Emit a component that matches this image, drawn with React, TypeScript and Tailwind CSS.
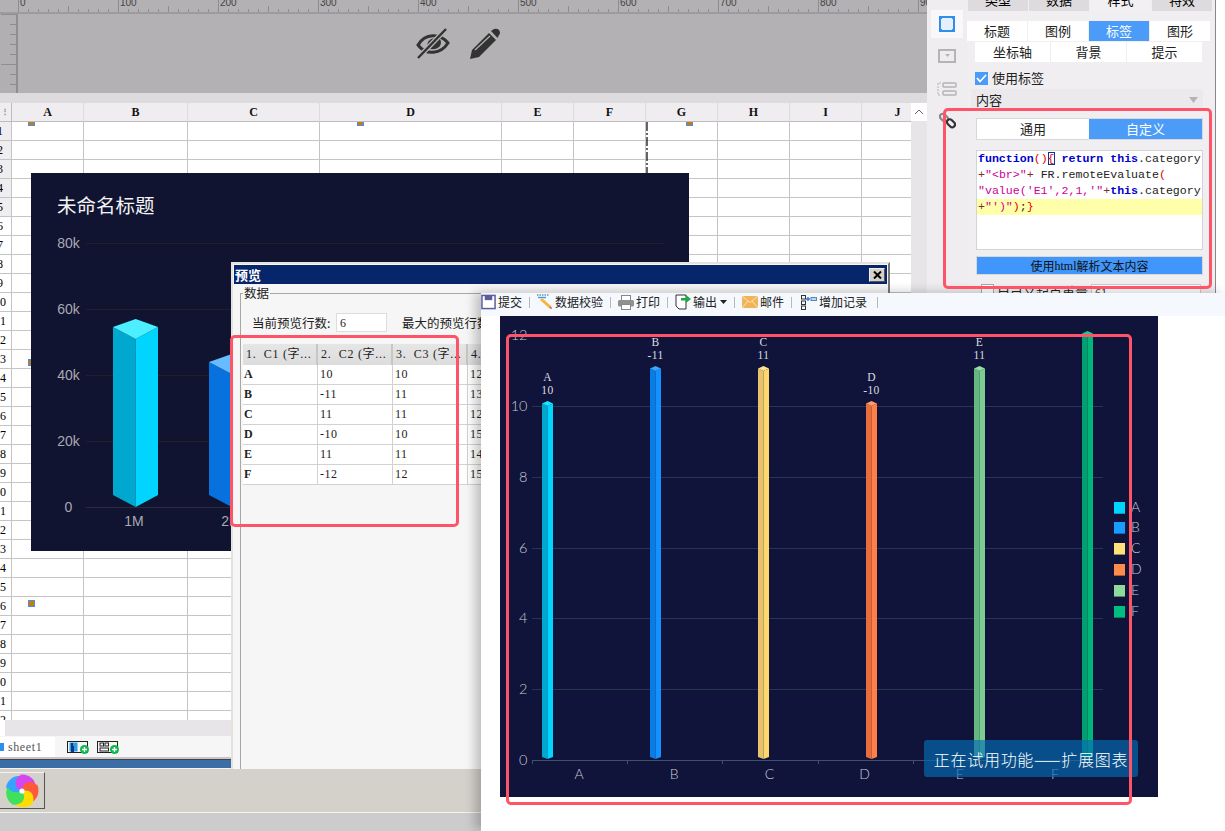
import React from "react";

const cjk = "font-['Noto_Sans_CJK_SC','Liberation_Sans',sans-serif]";
const mono = "font-['Liberation_Mono','Noto_Sans_CJK_SC',monospace]";
const serif = "font-['Liberation_Serif','Noto_Sans_CJK_SC',serif]";

const columns = ["A", "B", "C", "D", "E", "F", "G", "H", "I", "J"];
const sheetGrid = "grid grid-cols-[12px_72px_104px_132px_182px_72px_72px_72px_72px_72px_72px] w-[1022px]";

function Ruler() {
  const ticks = Array.from({ length: 92 }, (_, i) => i);
  return (
    <div className="relative h-[14px] bg-[#b3b1b3] border-b-2 border-[#9d9b9d] overflow-hidden">
      <svg width="927" height="14" className="block">
        {ticks.map((i) => {
          const x = 18 + i * 10;
          const h = i % 10 === 0 ? 13 : i % 5 === 0 ? 7 : 4;
          return <line key={i} x1={x + 0.5} x2={x + 0.5} y1={13 - h} y2={13} stroke="#8f8d8f" />;
        })}
        {[0, 100, 200, 300, 400, 500, 600, 700, 800, 900].map((n, i) => (
          <text key={n} x={20 + i * 100} y={6} fontSize="10" fill="#444" fontFamily="Liberation Sans">{n}</text>
        ))}
      </svg>
    </div>
  );
}

function EyeOff() {
  return (
    <svg width="34" height="32" viewBox="0 0 34 32">
      <path d="M2 17 C9 5 24 5 32 15 C25 26 10 28 2 17Z" fill="none" stroke="#333" strokeWidth="3" />
      <path d="M12 20 C9 12 18 8 24 11 C28 18 19 24 12 20Z" fill="#333" />
      <path d="M30 1 L2 30" stroke="#b3b1b3" strokeWidth="5" />
      <path d="M30 1 L2 30" stroke="#333" strokeWidth="2.4" />
    </svg>
  );
}

function PencilIcon() {
  return (
    <svg width="32" height="32" viewBox="0 0 32 32">
      <path d="M1 31 L3 22 L20 5 L27 12 L10 29Z" fill="#333" />
      <path d="M22 3 L25 1 Q28 0 30 2 Q32 5 30 7 L28.5 10Z" fill="#333" />
      <path d="M6 22 L21 8" stroke="#b3b1b3" strokeWidth="1.2" />
    </svg>
  );
}

function Canvas() {
  return (
    <div className="flex h-[79px] bg-[#b3b1b3]">
      <div className="relative w-[18px] shrink-0 bg-[#b1afb1] border-r-2 border-[#8f8d8f] overflow-hidden">
        <svg width="16" height="79" className="block">
          {[0, 1, 2, 3, 4, 5, 6, 7].map((i) => (
            <line key={i} x1={i % 5 === 0 ? 1 : 10} x2="16" y1={i * 10 + 0.5} y2={i * 10 + 0.5} stroke="#8f8d8f" />
          ))}
        </svg>
      </div>
      <div className="flex items-start gap-[19px] pl-[398px] pt-[14px]">
        <EyeOff />
        <PencilIcon />
      </div>
    </div>
  );
}

function Sheet() {
  const rows = Array.from({ length: 32 }, (_, i) => i + 1);
  return (
    <div className="flex h-[617px]">
      <div className={`w-[911px] h-[617px] overflow-hidden bg-white ${serif}`}>
        <div className={`${sheetGrid} h-[19px] bg-[#efedf0] text-[12px] font-bold text-[#111]`}>
          <div className="border-b border-[#bdbdbd] border-r flex flex-col items-start justify-center gap-[2px] pl-[1px]">
            <span className="text-[#888] text-[8px] leading-[8px]">⋮</span>
          </div>
          {columns.map((c) => (
            <div key={c} className="border-b border-r border-r-[#dcdcdc] border-b-[#bdbdbd] flex items-center justify-center">{c}</div>
          ))}
        </div>
        {rows.map((r) => (
          <div key={r} className={`${sheetGrid} h-[19px]`}>
            <div className={`border-r border-b border-[#c4c4c4] text-[12px] leading-[18px] overflow-hidden whitespace-nowrap ${r <= 5 ? "bg-[#efedf0]" : "bg-white"}`}>
              <span className={`block w-[6px] text-right ${r < 10 ? "-ml-[3px]" : "ml-0"}`}>{r % 10}</span>
            </div>
            {columns.map((c) => (
              <div key={c} className="border-r border-b border-[#c4c4c4]" />
            ))}
          </div>
        ))}
      </div>
      <div className="w-[16px] bg-[#e8e5e8]">
        <div className="h-[18px] bg-white flex items-center justify-center">
          <svg width="10" height="6" viewBox="0 0 10 6"><path d="M1 5 L5 1 L9 5" fill="none" stroke="#666" /></svg>
        </div>
      </div>
    </div>
  );
}

function Marker({ className }: { className: string }) {
  return <div className={`absolute w-[7px] bg-[#cc7a0a] border border-[#3d8ff0] ${className}`} />;
}

function BigChart() {
  const ys: [string, number][] = [["80k", 243], ["60k", 309], ["40k", 375], ["20k", 441], ["0", 507]];
  return (
    <svg width="658" height="378" viewBox="31 173 658 378" className="block">
      <rect x="31" y="173" width="658" height="378" fill="#101431" />
      {ys.map(([t, y]) => (
        <g key={t}>
          <line x1="86" x2="664" y1={y + 0.5} y2={y + 0.5} stroke={t === "0" ? "#2c2c3e" : "#1f2029"} />
          <text x="68.5" y={y + 5} textAnchor="middle" fontSize="14" fill="#a9a9b2" fontFamily="Liberation Sans">{t}</text>
        </g>
      ))}
      <polygon points="113,327 135.7,339 135.7,507 113,495" fill="#00a8cf" />
      <polygon points="135.7,339 158,327 158,495 135.7,507" fill="#00d4ff" />
      <polygon points="113,327 135.7,319 158,327 135.7,339" fill="#4cefff" />
      <polygon points="209,362 231.7,374 231.7,507 209,495" fill="#0772de" />
      <polygon points="231.7,374 254,362 254,495 231.7,507" fill="#0a84ff" />
      <polygon points="209,362 231.7,354 254,362 231.7,374" fill="#66bcff" />
      <text x="134" y="526" textAnchor="middle" fontSize="14" fill="#a9a9b2" fontFamily="Liberation Sans">1M</text>
      <text x="231" y="526" textAnchor="middle" fontSize="14" fill="#a9a9b2" fontFamily="Liberation Sans">2M</text>
      <text x="57" y="213" fontSize="19.5" fill="#f4f4f6" fontFamily="Noto Sans CJK SC">未命名标题</text>
    </svg>
  );
}

function SheetTabs() {
  return (
    <div>
      <div className="h-[16px] bg-white pl-[5px]"><div className="h-full bg-[#e8e5e8]" /></div>
      <div className={`h-[21px] bg-[#f6f6f6] flex items-center ${serif}`}>
        <div className="w-[55px] h-[20px] bg-white flex items-center">
          <div className="w-[4px] h-[8px] bg-[#2e8fe8] mr-[4px]" />
          <span className="text-[12px] tracking-[0.6px] text-[#555]">sheet1</span>
        </div>
        <div className="flex gap-[8px] ml-[12px]">
          <AddIcon kind="chart" />
          <AddIcon kind="form" />
        </div>
      </div>
      <div className="h-[3px] bg-[#c8c6c8] border-b border-[#444]" />
      <div className="h-[8px] bg-[#3a6ea5]" />
      <div className="h-px bg-[#f4f3f0]" />
      <div className="h-[43px] bg-[#d4d1cb] pt-[3px]">
        <div className="w-[45px] h-[37px] border border-[#555] border-l-0 border-t-[#f4f4f4] bg-[#d4d1cb] flex items-center justify-center">
          <Wheel />
        </div>
      </div>
      <div className="h-px bg-[#f4f3f0]" />
      <div className="h-[18px] bg-[#cccccc]" />
    </div>
  );
}

function AddIcon({ kind }: { kind: "chart" | "form" }) {
  return (
    <svg width="22" height="14" viewBox="0 0 22 14">
      <rect x="0.5" y="1.5" width="20" height="11" fill="none" stroke="#222" />
      {kind === "chart" ? (
        <>
          <rect x="2.5" y="2.5" width="8" height="9" fill="#2d9ee8" />
          <rect x="4" y="6" width="3" height="6" fill="#0a3a80" />
          <rect x="4" y="3" width="2" height="3" fill="#0a3a80" />
        </>
      ) : (
        <>
          <rect x="3" y="3" width="3.5" height="3" fill="none" stroke="#222" />
          <rect x="8" y="3" width="3.5" height="3" fill="none" stroke="#222" />
          <rect x="3" y="8" width="8.5" height="3" fill="none" stroke="#222" />
        </>
      )}
      <circle cx="17.5" cy="9.5" r="4.5" fill="#0fb84d" />
      <path d="M15 9.5 H20 M17.5 7 V12" stroke="#fff" strokeWidth="1.3" />
    </svg>
  );
}

function Wheel() {
  const colors = ["#35a4ff", "#d545f0", "#ff5a3c", "#ffdc00", "#3fe05c"];
  return (
    <svg width="34" height="34" viewBox="-17 -17 34 34">
      {colors.map((c, i) => (
        <g key={c} transform={`rotate(${i * 72 - 60})`}>
          <path d="M0 0 C-9 -1 -11 -10 -4 -16 C3 -18 11 -14 12 -8 C6 -9 2 -6 0 0Z" fill={c} />
        </g>
      ))}
      <circle r="2.6" fill="#fff" />
    </svg>
  );
}

function RightPanel() {
  const tabClass = "flex items-center justify-center bg-white text-[13px] leading-[18px] text-[#222]";
  return (
    <div className={`flex h-[293px] w-[298px] bg-[#efedf0] ${cjk}`}>
      <div className="w-[40px] flex flex-col items-center pt-[10px]">
        <div className="w-[32px] h-[28px] bg-[#f8f8fa] flex items-center justify-center">
          <svg width="18" height="18" viewBox="0 0 18 18">
            <rect x="2" y="2" width="14" height="14" fill="#e6f0fc" stroke="#2e8fee" strokeWidth="2" />
            <rect x="1" y="1" width="3" height="3" fill="#2e8fee" /><rect x="14" y="1" width="3" height="3" fill="#2e8fee" />
            <rect x="1" y="14" width="3" height="3" fill="#2e8fee" /><rect x="14" y="14" width="3" height="3" fill="#2e8fee" />
          </svg>
        </div>
        <svg width="18" height="14" viewBox="0 0 18 14" className="mt-[11px]">
          <rect x="1" y="1" width="16" height="12" fill="none" stroke="#b4b4b4" strokeWidth="2" />
          <path d="M7 5 H12 L9.5 8Z" fill="#b4b4b4" />
        </svg>
        <svg width="20" height="14" viewBox="0 0 20 14" className="mt-[19px]">
          <rect x="6" y="1" width="13" height="4" rx="1" fill="none" stroke="#b4b4b4" strokeWidth="1.5" />
          <rect x="6" y="9" width="13" height="4" rx="1" fill="none" stroke="#b4b4b4" strokeWidth="1.5" />
          <path d="M4 1 H1 V13 H4" fill="none" stroke="#b4b4b4" strokeDasharray="2 1" />
        </svg>
        <svg width="17" height="17" viewBox="0 0 17 17" className="mt-[16px]">
          <g fill="none" strokeWidth="2.2">
            <rect x="0.5" y="3" width="9" height="5.5" rx="2.7" transform="rotate(45 5 5.7)" stroke="#8a8a8a" />
            <rect x="7.5" y="8.5" width="9" height="5.5" rx="2.7" transform="rotate(45 12 11.2)" stroke="#333" />
          </g>
        </svg>
      </div>
      <div className="w-[248px] bg-[#f0eef0] overflow-hidden">
        <div className="grid grid-cols-[60px_60px_61px_60px] gap-x-px h-[11px] overflow-hidden pl-px">
          {["类型", "数据", "样式", "特效"].map((t, i) => (
            <div key={t} className={`h-[11px] text-[13px] leading-[0px] text-center ${i === 2 ? "bg-[#f2f0f3]" : "bg-[#dddbdd]"}`}>
              <span className="block">{t}</span>
            </div>
          ))}
        </div>
        <div className="grid grid-cols-[60px_60px_60px_60px] gap-x-px mt-[10px] h-[20px]">
          {["标题", "图例", "标签", "图形"].map((t) => (
            <div key={t} className={t === "标签" ? "flex items-center justify-center bg-[#4a9cf8] text-[13px] leading-[18px] text-white" : tabClass}>{t}</div>
          ))}
        </div>
        <div className="grid grid-cols-[75px_75px_75px] gap-x-px mt-px ml-[8px] h-[20px]">
          {["坐标轴", "背景", "提示"].map((t) => (
            <div key={t} className={tabClass}>{t}</div>
          ))}
        </div>
        <div className="flex items-center h-[14px] mt-[9px] ml-[8px] gap-[4px]">
          <div className="w-[13px] h-[13px] bg-[#4a9cf8] flex items-center justify-center">
            <svg width="11" height="9" viewBox="0 0 11 9"><path d="M1 4 L4 7.5 L10 1" fill="none" stroke="#fff" strokeWidth="1.8" /></svg>
          </div>
          <span className="text-[13px] leading-[12px] text-[#222]">使用标签</span>
        </div>
        <div className="mt-[4px] mx-[4px] w-[232px] h-[21px] bg-[#ebe9eb] flex items-center justify-between px-[5px]">
          <span className="text-[13px] text-[#222] leading-[21px]">内容</span>
          <svg width="9" height="6" viewBox="0 0 9 6"><path d="M0 0 H9 L4.5 6Z" fill="#b5b5b5" /></svg>
        </div>
        <div className="ml-[9px] w-[227px] h-[22px] mt-[8px] flex border border-[#d8d8d8] bg-white">
          <div className="w-[112px] flex items-center justify-center text-[13px] text-[#222]">通用</div>
          <div className="w-[113px] flex items-center justify-center text-[13px] text-white bg-[#4a9cf8]">自定义</div>
        </div>
        <Code />
        <div className="ml-[9px] mt-[6px] w-[227px] h-[19px] bg-[#4096fa] border border-[#d8d8d8] flex items-center justify-center text-[12px] leading-[16px] text-[#111]">
          使用<span className={serif}>html</span>解析文本内容
        </div>
        <div className="ml-[14px] mt-[9px] flex items-start gap-[3px]">
          <div className="w-[13px] h-[13px] border border-[#aaa] bg-white" />
          <span className="text-[13px] text-[#222] leading-[15px]">自己义起点重量</span>
          <div className="w-[110px] h-[16px] border border-[#ccc] bg-white pl-[3px] text-[11px] leading-[15px] text-[#444]">61</div>
        </div>
      </div>
      <div className="w-px bg-[#888]" />
      <div className="w-[9px] bg-white" />
    </div>
  );
}

function Code() {
  const kw = "text-[#0000d0] font-bold";
  const str = "text-[#cc0099]";
  const red = "text-[#e00000]";
  const op = "text-[#7a3030]";
  return (
    <div className={`ml-[9px] mt-[10px] w-[227px] h-[100px] bg-white border border-[#d4d4d4] text-[11.6px] leading-[16px] whitespace-nowrap overflow-hidden ${mono}`}>
      <div className="pl-px text-[#222]">
        <span className={kw}>function</span><span className={red}>()</span><span className={`${red} outline outline-1 outline-[#1030a0] -outline-offset-1`}>{"{"}</span> <span className={kw}>return</span> <span className={kw}>this</span>.category
      </div>
      <div className="pl-px text-[#222]">
        <span className={op}>+</span><span className={str}>{'"<br>"'}</span><span className={op}>+</span> FR.remoteEvaluate<span className={red}>(</span>
      </div>
      <div className="pl-px text-[#222]">
        <span className={str}>{`"value('E1',2,1,'"`}</span><span className={op}>+</span><span className={kw}>this</span>.category
      </div>
      <div className="pl-px bg-[#ffffaa] text-[#222]">
        <span className={op}>+</span><span className={str}>{`"')"`}</span><span className={red}>)</span>;<span className={red}>{"}"}</span>
      </div>
    </div>
  );
}

const rowsData = [
  ["A", "10", "10", "12"],
  ["B", "-11", "11", "13"],
  ["C", "11", "11", "12"],
  ["D", "-10", "10", "15"],
  ["E", "11", "11", "14"],
  ["F", "-12", "12", "15"],
];

function Dialog() {
  const cols = "grid grid-cols-[75px_75px_75px_75px]";
  return (
    <div className={`absolute left-[231px] top-[262px] w-[659px] h-[507px] bg-[#f6f6f6] border-2 border-[#e4e2dc] border-b-0 border-r-[#777] flex flex-col ${cjk}`}>
      <div className="h-[19px] mt-px mx-px bg-[#07256b] flex items-center justify-between pl-[1px] pr-[2px]">
        <span className="text-[13px] font-bold text-white leading-[18px]">预览</span>
        <div className="w-[16px] h-[14px] bg-[#d4d1cb] border border-[#f0f0f0] border-r-[#555] border-b-[#555] flex items-center justify-center">
          <svg width="9" height="8" viewBox="0 0 9 8"><path d="M1 0.5 L8 7.5 M8 0.5 L1 7.5" stroke="#000" strokeWidth="2" /></svg>
        </div>
      </div>
      <div className="relative mt-[9px] ml-[7px] mr-[7px] flex-1 border-l border-t border-[#a9a79f]">
        <span className="absolute -top-[10px] left-[2px] bg-[#f6f6f6] px-[1px] text-[12.5px] leading-[18px] text-[#222]">数据</span>
        <div className="flex items-center h-[19px] mt-[19px] pl-[11px] text-[12.5px] leading-[18px] text-[#222]">
          <span className="w-[84px] whitespace-nowrap">当前预览行数:</span>
          <div className={`w-[51px] h-[19px] border border-[#ddd] bg-white pl-[3px] text-[12px] leading-[18px] ${serif}`}>6</div>
          <span className="ml-[15px] whitespace-nowrap">最大的预览行数</span>
        </div>
        <div className={`mt-[12px] ml-[2px] text-[12px] ${serif}`}>
          <div className={`${cols} h-[21px] bg-gradient-to-b from-[#e6e6e6] to-[#dcdcdc] text-[#222]`}>
            {["1.  C1 (字...", "2.  C2 (字...", "3.  C3 (字...", "4."].map((h) => (
              <div key={h} className="border-r-2 border-[#c8c6c0] pl-[3px] tracking-[0.7px] leading-[20px] whitespace-pre overflow-hidden">{h}</div>
            ))}
          </div>
          {rowsData.map((r) => (
            <div key={r[0]} className={`${cols} h-[20px]`}>
              {r.map((v, i) => (
                <div key={i} className={`bg-white border-b border-r border-[#d2d2d2] leading-[19px] text-[#222] ${i === 0 ? "pl-px font-bold" : "pl-[2px] tracking-[0.5px]"}`}>{v}</div>
              ))}
            </div>
          ))}
        </div>
      </div>
    </div>
  );
}

function ToolItem({ icon, label, extra }: { icon: React.ReactNode; label: string; extra?: React.ReactNode }) {
  return (
    <div className="flex items-center gap-[2px]">
      {icon}
      <span className="text-[12px] text-[#222] whitespace-nowrap leading-[16px]">{label}</span>
      {extra}
    </div>
  );
}

function Sep() {
  return <div className="w-px h-[11px] bg-[#b8b8b8]" />;
}

function Toolbar() {
  return (
    <div className={`h-[23px] bg-[#f5f8fd] flex items-center gap-[7px] pb-[5px] ${cjk}`}>
      <ToolItem label="提交" icon={
        <svg width="15" height="16" viewBox="0 0 16 16">
          <rect x="1" y="1" width="14" height="14" fill="#fff" stroke="#5c5c9e" strokeWidth="1.6" />
          <rect x="4" y="1" width="8" height="5" fill="#5c5c9e" />
        </svg>
      } />
      <Sep />
      <ToolItem label="数据校验" icon={
        <svg width="16" height="16" viewBox="0 0 16 16">
          <path d="M0 1 H12" stroke="#3a5a8a" strokeDasharray="1.5 1" />
          <path d="M1 3.5 H9" stroke="#38a0e8" strokeWidth="1.4" />
          <path d="M3 6 L5 4 L14 12 L12 14Z" fill="#f5b53c" />
          <path d="M12 14 L14 12 L15 15Z" fill="#e8443a" />
        </svg>
      } />
      <Sep />
      <ToolItem label="打印" icon={
        <svg width="16" height="15" viewBox="0 0 16 15">
          <rect x="3.5" y="0.5" width="9" height="5" fill="#fff" stroke="#888" />
          <rect x="0" y="5" width="16" height="6.5" rx="1.5" fill="#909090" />
          <rect x="3.5" y="9.5" width="9" height="5" fill="#fff" stroke="#888" />
        </svg>
      } />
      <Sep />
      <ToolItem label="输出" icon={
        <svg width="16" height="16" viewBox="0 0 16 16">
          <path d="M1 1 H11 V15 H4 L1 12Z" fill="#fff" stroke="#333" />
          <path d="M6 4 H11 V1 L16 5 L11 9 V6.5 H6Z" fill="#20a848" />
        </svg>
      } extra={<svg width="7" height="4" viewBox="0 0 7 4" className="ml-[1px]"><path d="M0 0 H7 L3.5 4Z" fill="#222" /></svg>} />
      <Sep />
      <ToolItem label="邮件" icon={
        <svg width="16" height="12" viewBox="0 0 16 12">
          <rect width="16" height="12" fill="#f0b45a" />
          <path d="M0 0 L8 6.5 L16 0 M0 12 L6 5 M16 12 L10 5" fill="none" stroke="#fbe3bb" />
        </svg>
      } />
      <Sep />
      <ToolItem label="增加记录" icon={
        <svg width="16" height="15" viewBox="0 0 16 15" className="ml-[2px]">
          <rect x="0.5" y="0.5" width="4" height="3.5" fill="none" stroke="#333" />
          <rect x="0.5" y="6" width="4" height="3.5" fill="none" stroke="#333" />
          <rect x="0.5" y="11" width="4" height="3.5" fill="none" stroke="#333" />
          <path d="M5 4 H9 M7 2 V6" stroke="#2a80e0" strokeWidth="1.4" />
          <rect x="10" y="2.5" width="5.5" height="3" fill="#bcd6f0" stroke="#5a86b0" />
        </svg>
      } />
      <div className="w-px h-[11px] bg-[#b8b8b8] ml-[3px]" />
    </div>
  );
}

const bars = [
  { n: "A", v: "10", cx: 547.5, top: 401, l: "#00a8cf", r: "#00d4ff", t: "#19e4ff", lab: 377, val: 390 },
  { n: "B", v: "-11", cx: 655.5, top: 366, l: "#0a7ce6", r: "#1291ff", t: "#3aa6ff", lab: 342, val: 355 },
  { n: "C", v: "11", cx: 763.5, top: 366, l: "#e9c36c", r: "#ffd76f", t: "#ffe490", lab: 342, val: 355 },
  { n: "D", v: "-10", cx: 871.5, top: 401, l: "#e86d3c", r: "#ff7f47", t: "#ff9a6a", lab: 377, val: 390 },
  { n: "E", v: "11", cx: 979.5, top: 366, l: "#66b77f", r: "#7ccd92", t: "#98dcab", lab: 342, val: 355 },
  { n: "F", v: "", cx: 1087.5, top: 331, l: "#00a070", r: "#00b47a", t: "#1cc88e", lab: 0, val: 0 },
];
const legend = [
  { n: "A", c: "#00d4ff", d: "#0a9cc0", y: 502 },
  { n: "B", c: "#1a9bff", d: "#0c6cc0", y: 522 },
  { n: "C", c: "#ffe27a", d: "#9a8a5a", y: 543 },
  { n: "D", c: "#ff8c4a", d: "#a85a38", y: 564 },
  { n: "E", c: "#8ed99c", d: "#4e8a68", y: 585 },
  { n: "F", c: "#00bd80", d: "#08805c", y: 606 },
];

function ThinChart() {
  const labelFont = "Lato, Liberation Sans, sans-serif";
  const axis: [string, number][] = [["12", 335], ["10", 406], ["8", 477], ["6", 548], ["4", 618], ["2", 689], ["0", 760]];
  return (
    <svg width="658" height="481" viewBox="500 316 658 481" className="block">
      <rect x="500" y="316" width="658" height="481" fill="#10143a" />
      {axis.map(([t, y]) => (
        <g key={t}>
          {t !== "0" && t !== "12" && <line x1="532" x2="1103" y1={y + 0.5} y2={y + 0.5} stroke="#26364e" />}
          <text x="527.5" y={y + 5} textAnchor="end" fontSize="14.5" fontWeight="300" fill="#c8cad8" fontFamily={labelFont}>{t}</text>
        </g>
      ))}
      <line x1="532" x2="1103" y1="760.5" y2="760.5" stroke="#3f506b" />
      {[532, 627, 722, 818, 913, 1008, 1103].map((x) => (
        <line key={x} x1={x + 0.5} x2={x + 0.5} y1="760" y2="764" stroke="#3f506b" />
      ))}
      {["A", "B", "C", "D", "E", "F"].map((n, i) => (
        <text key={n} x={579 + i * 95.2} y="779" textAnchor="middle" fontSize="14" fontWeight="300" fill="#c8cad8" fontFamily={labelFont}>{n}</text>
      ))}
      {bars.map((b) => (
        <g key={b.n}>
          <polygon points={`${b.cx - 5.5},${b.top + 2.5} ${b.cx},${b.top + 5} ${b.cx},759 ${b.cx - 5.5},757`} fill={b.l} />
          <polygon points={`${b.cx},${b.top + 5} ${b.cx + 5.5},${b.top + 2.5} ${b.cx + 5.5},757 ${b.cx},759`} fill={b.r} />
          <polygon points={`${b.cx - 5.5},${b.top + 2.5} ${b.cx},${b.top} ${b.cx + 5.5},${b.top + 2.5} ${b.cx},${b.top + 5}`} fill={b.t} />
          {b.lab > 0 && (
            <>
              <text x={b.cx} y={b.lab + 4} textAnchor="middle" fontSize="11.5" letterSpacing="0.4" fill="#dcdce2" fontFamily="Liberation Serif">{b.n}</text>
              <text x={b.cx} y={b.val + 4} textAnchor="middle" fontSize="11.5" letterSpacing="0.4" fill="#dcdce2" fontFamily="Liberation Serif">{b.v}</text>
            </>
          )}
        </g>
      ))}
      {legend.map((l) => (
        <g key={l.n}>
          <rect x="1114" y={l.y} width="11" height="12" fill={l.d} />
          <rect x="1114" y={l.y} width="11" height="11" fill={l.c} />
          <text x="1131" y={l.y + 10} fontSize="14" fontWeight="300" fill="#c8cad8" fontFamily={labelFont}>{l.n}</text>
        </g>
      ))}
    </svg>
  );
}

function PreviewWindow() {
  return (
    <div className="absolute left-[481px] top-[293px] w-[744px] h-[538px] bg-white shadow-[-6px_-1px_10px_rgba(0,0,0,0.22)]">
      <Toolbar />
      <div className="ml-[19px]"><ThinChart /></div>
      <div className={`absolute left-[443px] top-[447px] w-[214px] h-[37px] rounded-[3px] bg-[rgba(4,109,181,0.65)] flex items-center justify-center text-[16px] tracking-[0.7px] font-light text-white whitespace-nowrap ${cjk}`}>
        正在试用功能——扩展图表
      </div>
    </div>
  );
}

export default function App() {
  return (
    <div className={`relative w-[1225px] h-[831px] overflow-hidden bg-[#cccccc] ${cjk}`}>
      <div className="flex">
        <div className="w-[927px]">
          <Ruler />
          <Canvas />
          <div className="h-[10px] bg-[#dddbdd]" />
          <Sheet />
          <SheetTabs />
        </div>
        <RightPanel />
      </div>

      <svg width="2" height="51" className="absolute left-[646px] top-[122px]">
        <line x1="1" x2="1" y1="0" y2="51" stroke="#000" strokeWidth="1.2" strokeDasharray="9 2 2 2" />
      </svg>
      <Marker className="left-[28px] top-[122px] h-[4px] border-t-0" />
      <Marker className="left-[357px] top-[122px] h-[4px] border-t-0" />
      <Marker className="left-[686px] top-[122px] h-[4px] border-t-0" />
      <Marker className="left-[28px] top-[359px] h-[7px]" />
      <Marker className="left-[28px] top-[600px] h-[7px]" />

      <div className="absolute left-[31px] top-[173px]"><BigChart /></div>
      <Dialog />
      <PreviewWindow />

      <div className="absolute left-[943px] top-[108px] w-[269px] h-[181px] rounded-[5px] border-[3px] border-[#ff5468]" />
      <div className="absolute left-[230px] top-[335px] w-[229px] h-[192px] rounded-[5px] border-[3px] border-[#ff5468]" />
      <div className="absolute left-[506px] top-[334px] w-[626px] h-[471px] rounded-[5px] border-[3px] border-[#ff5468]" />
    </div>
  );
}
